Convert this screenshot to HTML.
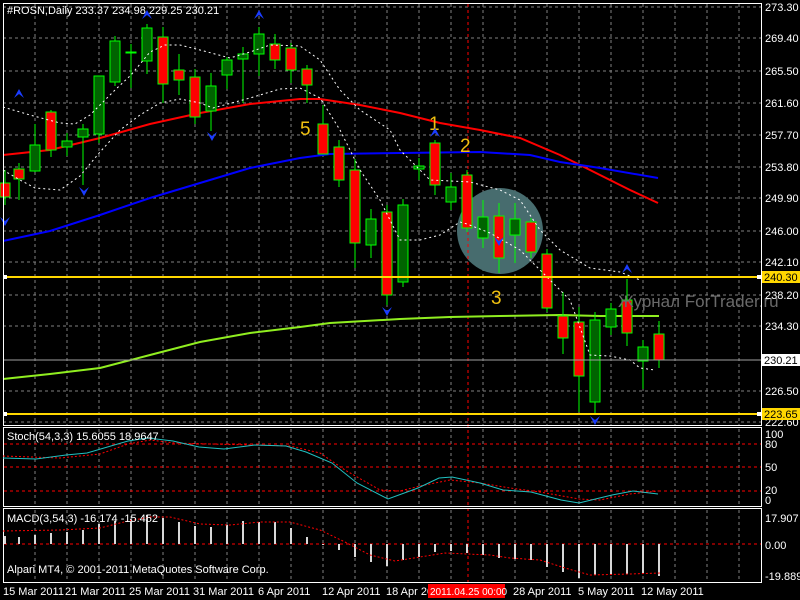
<!DOCTYPE html>
<html><head><meta charset="utf-8"><style>
html,body{margin:0;padding:0;background:#000;width:800px;height:600px;overflow:hidden}
svg{display:block}
text{font-family:"Liberation Sans",sans-serif;font-size:11px;fill:#fff}
</style></head><body>
<svg id="s" width="800" height="600" xmlns="http://www.w3.org/2000/svg">
<rect width="800" height="600" fill="#000"/>
<g id="grid" stroke="#808080" stroke-width="1" stroke-dasharray="3,3"></g>
<circle cx="500" cy="231" r="43" fill="#476c6e"/>
<line x1="468" y1="4" x2="468" y2="582" stroke="#ff0000" stroke-dasharray="3,3"/>
<g id="ma" fill="none" stroke-width="2"></g>
<g id="candles"></g>
<g id="env" fill="none" stroke="#fff" stroke-width="1" stroke-dasharray="2,3"></g>
<line x1="3" y1="360" x2="761" y2="360" stroke="#a0a0a0"/>
<line x1="3" y1="277" x2="761" y2="277" stroke="#ffd700" stroke-width="2"/>
<line x1="3" y1="414" x2="761" y2="414" stroke="#ffd700" stroke-width="2"/>
<rect x="3" y="275" width="4" height="4" fill="#fff"/><rect x="3" y="412" width="4" height="4" fill="#fff"/>
<rect x="757" y="275" width="4" height="4" fill="#fff"/><rect x="757" y="412" width="4" height="4" fill="#fff"/>
<text x="429" y="130" style="font-size:19px;fill:#f0c010">1</text>
<text x="460" y="152" style="font-size:19px;fill:#f0c010">2</text>
<text x="491" y="304" style="font-size:19px;fill:#f0c010">3</text>
<text x="300" y="135" style="font-size:19px;fill:#f0c010">5</text>
<g id="arrows" fill="#1a3cff"></g>
<text x="618" y="307" style="font-size:17px;fill:#6a6a6a">Журнал ForTrader.ru</text>
<g id="panels" fill="none" stroke="#fff"></g>
<g id="ind"></g>
<text x="7" y="14">#ROSN,Daily  233.37 234.98 229.25 230.21</text>
<text x="7" y="440">Stoch(54,3,3) 15.6055 18.9647</text>
<text x="7" y="522">MACD(3,54,3) -16.174 -15.452</text>
<text x="7" y="573">Alpari MT4, © 2001-2011 MetaQuotes Software Corp.</text>
<g id="axis"></g>
</svg>
<script>
function el(p,t,a,txt){var e=document.createElementNS('http://www.w3.org/2000/svg',t);for(var k in a)e.setAttribute(k,a[k]);if(txt!=null)e.textContent=txt;document.getElementById(p).appendChild(e);return e;}
var hy=[7,38,71,103,135,167,198,231,262,295,326,391,422];
hy.forEach(function(y){el('grid','line',{x1:3,y1:y,x2:761,y2:y});});
for(var x=35;x<=739;x+=32){el('grid','line',{x1:x,y1:4,x2:x,y2:425});el('grid','line',{x1:x,y1:429,x2:x,y2:505});el('grid','line',{x1:x,y1:510,x2:x,y2:581});}
function pl(g,pts,st,extra){var d=pts.map(function(p){return p.join(',')}).join(' ');var a={points:d,stroke:st,fill:'none'};for(var k in extra)a[k]=extra[k];return el(g,'polyline',a);}
pl('ma',[[3,155],[50,150],[100,138],[150,124],[200,113],[250,104],[300,99],[320,99],[360,105],[400,113],[440,123],[480,130],[520,138],[560,155],[600,175],[630,190],[658,203]],'#ff0000');
pl('ma',[[3,241],[50,231],[100,215],[150,198],[200,183],[250,168],[300,158],[330,154],[400,153],[480,152],[530,155],[560,162],[600,168],[658,178]],'#0000ff');
pl('ma',[[3,379],[50,374],[100,368],[150,355],[200,342],[250,333],[300,327],[330,323],[400,319],[450,317],[500,316],[560,315],[600,316],[659,316]],'#90ee20');
var C=[[5,'r',183,197,170,205],[19,'r',169,179,163,200],[35,'g',145,171,124,172],[51,'r',112,150,110,157],[67,'g',141,147,133,156],[83,'g',129,137,124,185],[99,'g',76,134,76,143],[115,'g',41,82,36,86],[131,'d',52,53,44,88],[147,'g',28,61,24,74],[163,'r',37,84,27,103],[179,'r',70,80,54,95],[195,'r',77,117,69,124],[211,'g',86,111,73,131],[227,'g',60,75,57,89],[243,'g',54,59,47,103],[259,'g',34,54,27,76],[275,'r',44,60,34,69],[291,'r',48,70,43,83],[307,'r',69,85,65,103],[323,'r',124,154,105,154],[339,'r',147,180,140,187],[355,'r',170,243,159,268],[371,'g',219,245,209,258],[387,'r',212,295,205,305],[403,'g',205,282,199,287],[419,'g',166,169,158,180],[435,'r',143,185,140,195],[451,'g',187,202,173,210],[467,'r',175,228,170,232],[483,'g',217,238,200,248],[499,'r',216,258,203,273],[515,'g',219,235,203,263],[531,'r',222,252,218,258],[547,'r',254,308,249,312],[563,'r',316,338,292,354],[579,'r',322,376,307,412],[595,'g',320,402,312,414],[611,'g',309,327,303,335],[627,'r',300,333,279,346],[643,'g',347,361,340,389],[659,'r',334,360,321,368]];
C.forEach(function(c){var x=c[0];el('candles','line',{x1:x,y1:c[4],x2:x,y2:c[5],stroke:'#00ff00'});
var f=c[1]=='r'?'#ff0000':'#006400';el('candles','rect',{x:x-5,y:c[2],width:10,height:Math.max(1,c[3]-c[2]),fill:f,stroke:'#00ff00'});});
pl('env',[[3,107],[30,115],[60,123],[75,124],[90,115],[115,90],[131,75],[150,52],[165,45],[180,45],[200,50],[230,58],[250,52],[270,45],[300,46],[320,60],[340,90],[360,110],[390,130],[400,150],[430,180],[470,182],[500,190],[520,200],[540,230],[560,250],[590,268],[620,272],[640,280]],'#fff');
pl('env',[[3,170],[20,180],[35,188],[60,190],[80,176],[100,152],[120,130],[140,115],[160,103],[180,99],[200,103],[213,108],[250,98],[280,89],[300,88],[320,98],[340,130],[360,170],[380,200],[400,240],[420,240],[440,235],[460,222],[467,224],[490,233],[520,250],[550,280],[570,300],[590,355],[610,356],[630,360],[640,368],[655,370]],'#fff');
function up(x,y){el('arrows','path',{d:'M'+(x-5)+','+(y+5)+' L'+x+','+(y-4)+' L'+(x+5)+','+(y+5)+' L'+x+','+(y+1)+'Z'});}
function dn(x,y){el('arrows','path',{d:'M'+(x-5)+','+(y-5)+' L'+x+','+(y+4)+' L'+(x+5)+','+(y-5)+' L'+x+','+(y-1)+'Z'});}
up(19,93);up(147,14);up(259,14);up(435,132);up(627,268);dn(84,192);dn(212,137);dn(387,312);dn(595,421);dn(499,242);dn(5,222);
el('panels','rect',{x:3.5,y:3.5,width:758,height:422});
el('panels','rect',{x:3.5,y:427.5,width:758,height:79});
el('panels','rect',{x:3.5,y:508.5,width:758,height:74});
[444,467,491].forEach(function(y){el('ind','line',{x1:4,y1:y,x2:761,y2:y,stroke:'#ff0000','stroke-dasharray':'3,3'});});
pl('ind',[[3,456],[60,458],[100,454],[128,444],[150,440],[175,443],[210,444],[255,445],[290,446],[320,453],[345,470],[380,490],[400,491],[420,486],[450,480],[480,483],[510,488],[540,492],[579,499],[600,500],[630,494],[658,491]],'#ff0000',{'stroke-dasharray':'2,2'});
pl('ind',[[3,458],[36,459],[66,455],[87,453],[128,441],[148,438],[173,441],[199,447],[224,449],[255,445],[286,446],[306,452],[332,463],[357,483],[388,499],[418,488],[439,478],[452,477],[480,483],[503,490],[531,492],[561,500],[579,503],[612,495],[633,491],[658,494]],'#20c0c0');
el('ind','line',{x1:4,y1:544,x2:761,y2:544,stroke:'#ff0000','stroke-dasharray':'3,3'});
var M=[536,537,535,533,532,530,524,521,519,515,518,522,526,527,525,521,522,522,528,537,544,550,557,562,566,560,557,552,551,553,555,558,559,560,567,572,578,575,575,574,573,576];
C.forEach(function(c,i){var y=M[i];el('ind','rect',{x:c[0]-1,y:Math.min(y,544),width:2,height:Math.max(1,Math.abs(y-544)),fill:'#d8d8d8'});});
pl('ind',[[3,531],[60,530],[100,528],[128,521],[150,517],[170,517],[200,524],[230,525],[260,522],[290,522],[320,530],[345,542],[370,555],[395,561],[420,557],[445,553],[467,554],[490,555],[510,558],[540,560],[565,568],[590,575],[630,574],[660,573]],'#ff0000',{'stroke-dasharray':'2,2'});
var L=[[7,'273.30'],[38,'269.40'],[71,'265.50'],[103,'261.60'],[135,'257.70'],[167,'253.80'],[198,'249.90'],[231,'246.00'],[262,'242.10'],[295,'238.20'],[326,'234.30'],[391,'226.50'],[422,'222.60']];
L.forEach(function(l){el('axis','text',{x:765,y:l[0]+4},l[1]);});
function box(y,t,bg){el('axis','rect',{x:762,y:y-6,width:38,height:12,fill:bg});el('axis','text',{x:764,y:y+4,style:'fill:#000'},t);}
box(277,'240.30','#ffd700');box(360,'230.21','#fff');box(414,'223.65','#ffd700');
[[436,'100'],[446,'80'],[469,'50'],[492,'20'],[502,'0'],[520,'17.907'],[547,'0.00'],[578,'-19.889']].forEach(function(l){el('axis','text',{x:765,y:l[0]+2},l[1]);});
var D=[[3,'15 Mar 2011'],[65,'21 Mar 2011'],[129,'25 Mar 2011'],[193,'31 Mar 2011'],[258,'6 Apr 2011'],[322,'12 Apr 2011'],[386,'18 Apr 20'],[513,'28 Apr 2011'],[578,'5 May 2011'],[641,'12 May 2011']];
D.forEach(function(d){el('axis','text',{x:d[0],y:595},d[1]);});
el('axis','rect',{x:428,y:584,width:77,height:14,fill:'#ff0000'});
el('axis','text',{x:430,y:595,style:'font-size:10px'},'2011.04.25 00:00');
</script>
</body></html>
